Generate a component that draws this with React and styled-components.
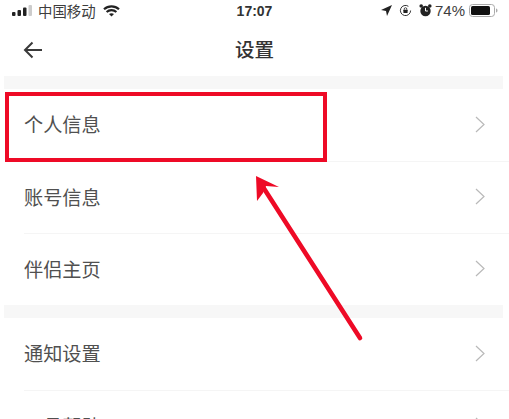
import React from 'react';
import styled, { createGlobalStyle } from 'styled-components';

const GlobalStyle = createGlobalStyle`
  html, body {
    margin: 0;
    padding: 0;
    background: #fff;
  }
  body {
    font-family: "Liberation Sans", "Noto Sans CJK SC", sans-serif;
  }
`;

const Page = styled.div`
  position: relative;
  width: 509px;
  height: 419px;
  overflow: hidden;
  background: #fff;
`;

const StatusBar = styled.div`
  height: 24px;
  display: flex;
  align-items: center;
  padding: 0 11px 3px 12px;
  box-sizing: border-box;
  color: #3d3d3d;
`;

const StatusSide = styled.div`
  flex: 1;
  display: flex;
  align-items: center;
  justify-content: ${p => (p.$end ? 'flex-end' : 'flex-start')};
  gap: ${p => p.$gap}px;
`;

const Carrier = styled.span`
  font-size: 14.4px;
  margin: 0 1px 0 -2px;
`;

const Percent = styled.span`
  font-size: 15px;
  margin: 0 -3px 0 -4px;
`;

const Clock = styled.div`
  font-size: 14px;
  font-weight: 700;
  color: #333;
  margin: 1px 1px 0 0;
`;

const Header = styled.div`
  height: 52px;
  display: flex;
  align-items: center;
  justify-content: center;
  position: relative;
`;

const BackButton = styled.svg`
  position: absolute;
  left: 23px;
  top: 17px;
`;

const Title = styled.div`
  font-size: 19.5px;
  font-weight: 500;
  color: #333;
  margin-top: -3px;
`;

const Gap = styled.div`
  height: 13px;
  margin: 0 6px 0 4px;
  background: #f7f7f7;
`;

const Group = styled.div`
  padding-left: 24px;
`;

const Row = styled.div`
  height: 72px;
  box-sizing: border-box;
  display: flex;
  align-items: center;
  justify-content: space-between;
  padding: 0 24px 2px 0;
  font-size: 19.2px;
  color: #505050;
  border-top: ${p => (p.$divided ? '1px solid #f5f5f5' : '0')};
`;

const Highlight = styled.div`
  position: absolute;
  left: 5px;
  top: 92px;
  width: 314px;
  height: 62px;
  border: 4px solid #ee0a26;
`;

const ArrowLayer = styled.svg`
  position: absolute;
  left: 0;
  top: 0;
`;

const Chevron = () => (
  <svg width="10" height="17" viewBox="0 0 10 17" fill="none">
    <path d="M1 1l8 7.5L1 16" stroke="#b9b9b9" strokeWidth="1.2" />
  </svg>
);

const Signal = () => (
  <svg width="22" height="14" viewBox="0 0 22 14">
    <rect x="0" y="8" width="3.5" height="4" rx="1" fill="#222" />
    <rect x="5.5" y="6" width="3.5" height="6" rx="1" fill="#222" />
    <rect x="11" y="3.5" width="3.5" height="8.5" rx="1" fill="#222" />
    <rect x="16.5" y="1" width="3.5" height="11" rx="1" fill="#ccc" />
  </svg>
);

const Wifi = () => (
  <svg width="17" height="13" viewBox="0 0 17 13" fill="none" stroke="#222" strokeWidth="2.2">
    <path d="M1 5.2c4.2-3.8 10.8-3.8 15 0" />
    <path d="M3.6 8c2.8-2.4 7-2.4 9.8 0" />
    <path d="M8.5 12.5L6 10c1.4-1 3.6-1 5 0z" fill="#222" stroke="none" />
  </svg>
);

const Location = () => (
  <svg width="11" height="11" viewBox="0 0 11 11">
    <path d="M11 0L0 5l5 1 1 5z" fill="#222" />
  </svg>
);

const RotationLock = () => (
  <svg width="13" height="13" viewBox="0 0 13 13" fill="none">
    <path d="M11.6 6.5A5.1 5.1 0 1 1 9.4 2.3" stroke="#333" strokeWidth="1" />
    <rect x="4.4" y="5.8" width="4.2" height="3.2" rx=".5" fill="#222" />
    <path d="M5.2 5.8V5a1.3 1.3 0 0 1 2.6 0v.8" stroke="#222" strokeWidth=".8" />
  </svg>
);

const Alarm = () => (
  <svg width="13" height="13" viewBox="0 0 13 13">
    <circle cx="6.5" cy="7" r="5.2" fill="#222" />
    <circle cx="2.2" cy="2" r="1.8" fill="#222" />
    <circle cx="10.8" cy="2" r="1.8" fill="#222" />
    <path d="M6.5 3.8V7h2.4" stroke="#fff" strokeWidth="1" fill="none" />
  </svg>
);

const Battery = () => (
  <svg width="29" height="13" viewBox="0 0 29 13">
    <rect x=".5" y=".5" width="25" height="12" rx="3" fill="none" stroke="#aaa" />
    <rect x="2" y="2" width="19" height="9" rx="1.6" fill="#111" />
    <path d="M27 4.5c1 .3 1.5 1 1.5 2s-.5 1.7-1.5 2z" fill="#aaa" />
  </svg>
);

const App = () => (
  <Page>
    <GlobalStyle />
    <StatusBar>
      <StatusSide $gap={6}>
        <Signal />
        <Carrier>中国移动</Carrier>
        <Wifi />
      </StatusSide>
      <Clock>17:07</Clock>
      <StatusSide $end $gap={7}>
        <Location />
        <RotationLock />
        <Alarm />
        <Percent>74%</Percent>
        <Battery />
      </StatusSide>
    </StatusBar>
    <Header>
      <BackButton width="20" height="18" viewBox="0 0 20 18" fill="none">
        <path d="M19 9H2M9.5 1.5L2 9l7.5 7.5" stroke="#3a3a3a" strokeWidth="2" />
      </BackButton>
      <Title>设置</Title>
    </Header>
    <Gap />
    <Group>
      <Row>个人信息<Chevron /></Row>
      <Row $divided>账号信息<Chevron /></Row>
      <Row $divided>伴侣主页<Chevron /></Row>
    </Group>
    <Gap />
    <Group>
      <Row>通知设置<Chevron /></Row>
      <Row $divided>工具帮助<Chevron /></Row>
    </Group>
    <Highlight />
    <ArrowLayer width="509" height="419" viewBox="0 0 509 419" fill="none">
      <path d="M360 338L263 187" stroke="#ee0a26" strokeWidth="4.6" strokeLinecap="round" />
      <path d="M256 176l23 11-13-1-3 7-6 8z" fill="#ee0a26" />
    </ArrowLayer>
  </Page>
);

export default App;
